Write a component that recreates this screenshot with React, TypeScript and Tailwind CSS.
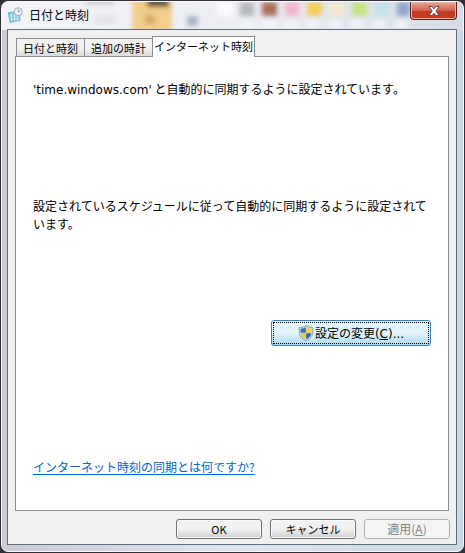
import { useState } from 'react';

const tabs = ['日付と時刻', '追加の時計', 'インターネット時刻'];

function ClockIcon() {
  return (
    <svg className="h-4 w-4 shrink-0" viewBox="0 0 16 16" aria-hidden="true">
      <path d="M1 5.5 12.5 4.5 13 13.5 3 15.5z" fill="#7cc5d8" stroke="#5ba8bf" strokeWidth="0.7" />
      <path d="M2 9h10.5M2.5 12h10M4.5 6v9M7.5 6v8.5M10.3 9v5.5" stroke="#e2f6fa" strokeWidth="0.7" />
      <circle cx="11.3" cy="4.7" r="4" fill="#eef2f3" stroke="#a2adb2" strokeWidth="1" />
      <path d="M11.3 2.4v2.5l2-.9" fill="none" stroke="#7c8c94" strokeWidth="0.9" />
    </svg>
  );
}

function ShieldIcon() {
  return (
    <svg className="h-4 w-4 shrink-0" viewBox="0 0 16 16" aria-hidden="true">
      <path
        d="M8 .5C6.3 1.9 4 2.6 1.2 2.6v4.2c0 3.9 2.7 6.8 6.8 8.7 4.1-1.9 6.8-4.8 6.8-8.7V2.6C12 2.6 9.7 1.9 8 .5z"
        fill="#d5dce0"
        stroke="#7b8c97"
        strokeWidth="0.8"
      />
      <path d="M7.8 2.1C6.4 3.1 4.7 3.7 2.6 3.8v4h5.2z" fill="#2b74c0" />
      <path d="M8.2 2.1c1.4 1 3.1 1.6 5.2 1.7v4H8.2z" fill="#f6d33c" />
      <path d="M2.7 8.2h5.1v6C5 12.7 3 10.7 2.7 8.2z" fill="#f2c92c" />
      <path d="M13.3 8.2H8.2v6c2.8-1.5 4.8-3.5 5.1-6z" fill="#2767b3" />
    </svg>
  );
}

// Whatever lies behind the translucent title bar
function GlassBackdrop() {
  return (
    <svg className="absolute left-0 top-0 h-7 w-[463px]" viewBox="0 0 463 28" aria-hidden="true">
      <defs>
        <filter id="glass" x="-20%" y="-50%" width="140%" height="200%">
          <feGaussianBlur stdDeviation="2.4" />
        </filter>
      </defs>
      <g filter="url(#glass)">
        <rect x="84" y="-3" width="28" height="5" fill="#c6c4d2" />
        <rect x="92" y="13" width="22" height="9" fill="#e3e4ea" />
        <rect x="130" y="-4" width="40" height="34" fill="#f3cf8b" />
        <rect x="145" y="-4" width="22" height="9" fill="#5d4c3c" />
        <rect x="143" y="13" width="10" height="9" fill="#d0a867" />
        <rect x="185" y="14" width="11" height="10" fill="#a9b4c9" />
        <rect x="215" y="0" width="16" height="14" fill="#fbfbfb" />
        <rect x="238" y="0" width="14" height="14" fill="#b6b8bb" />
        <rect x="260" y="0" width="15" height="14" fill="#a86f58" />
        <rect x="283" y="0" width="14" height="14" fill="#f2b5cb" />
        <rect x="305" y="0" width="15" height="14" fill="#f6cc5a" />
        <rect x="328" y="0" width="14" height="14" fill="#f1e9ca" />
        <rect x="350" y="0" width="15" height="14" fill="#c4e382" />
        <rect x="373" y="0" width="14" height="14" fill="#c2e2ea" />
        <rect x="395" y="0" width="13" height="14" fill="#94a7ca" />
        <path d="M238 22h176" stroke="#f1f4f8" strokeWidth="8" strokeDasharray="14 8" />
      </g>
    </svg>
  );
}

const buttonClass =
  'h-5 w-[86px] rounded-[3px] border border-[#707070] bg-linear-to-b from-[#f2f2f2] from-50% to-[#cfcfcf] to-100% text-center text-[11px] leading-4 text-black shadow-[inset_0_0_0_1px_#fbfbfb]';

export default function App() {
  const [active, setActive] = useState(2);

  return (
    <div className="flex min-h-screen flex-col bg-[#342f38] p-px font-['Noto_Sans_CJK_JP',sans-serif] text-xs text-black">
      <div className="relative flex flex-1 flex-col overflow-hidden rounded-[7px] border border-[#f7f9fb] bg-linear-to-r from-[#cbcbd7] via-[#dfe5ed] to-[#cbd8e5] pb-[6px] pl-[5px] pr-[6px]">
        <div className="absolute inset-x-0 top-0 h-7 bg-linear-to-r from-[#f3f4f7] via-[#eceef3] to-[#d5dce6]" />
        <GlassBackdrop />

        {/* Title bar */}
        <header className="relative flex h-[27px] shrink-0 items-center pb-[2px]">
          <ClockIcon />
          <h1 className="ml-[6px] flex-1 text-xs leading-4">日付と時刻</h1>
          <button
            type="button"
            aria-label="閉じる"
            className="flex h-[18px] w-[47px] items-center justify-center self-start rounded-b-[4px] border border-t-0 border-[#5a2023] bg-linear-to-b from-[#e6a69b] from-0% via-[#cf6352] via-50% to-[#c43b23] to-55% shadow-[inset_0_0_0_1px_#edb5a8]"
          >
            <svg className="h-3 w-3" viewBox="0 0 12 12" aria-hidden="true">
              <path
                d="M1 1.5h3l2 2.3 2-2.3h3L7.9 6l3.1 4.5H8L6 8.2l-2 2.3H1L4.1 6z"
                fill="#fff"
                stroke="#56484f"
                strokeWidth="0.9"
              />
            </svg>
          </button>
        </header>

        {/* Client area */}
        <main className="relative flex flex-1 flex-col border border-[#5f6e7b] bg-[#f0f0f0] px-[7px] pb-[5px] pt-[6px]">
          <div role="tablist" className="flex items-end px-px">
            {tabs.map((tab, i) => (
              <button
                key={tab}
                type="button"
                role="tab"
                aria-selected={active === i}
                onClick={() => setActive(i)}
                className={
                  active === i
                    ? 'relative -mb-px h-[21px] whitespace-nowrap border border-b-0 border-[#898c95] bg-white px-px pb-[2px] text-[11px] leading-4'
                    : 'h-[18px] w-[68px] whitespace-nowrap border border-r-0 border-b-0 border-[#898c95] bg-linear-to-b from-[#f3f3f3] from-50% to-[#dadada] text-[11px] leading-4'
                }
              >
                {tab}
              </button>
            ))}
          </div>

          <section
            role="tabpanel"
            className="flex flex-1 flex-col border border-[#898c95] bg-white px-[17px] pb-[34px] pt-[23px]"
          >
            <p className="leading-[18px]">
              <span className="font-['DejaVu_Sans',sans-serif]">'time.windows.com'</span>{' '}
              と自動的に同期するように設定されています。
            </p>
            <p className="mt-[98px] leading-[18px]">
              設定されているスケジュールに従って自動的に同期するように設定されています。
            </p>
            <button
              type="button"
              className="mt-[87px] h-[26px] w-40 self-end rounded-[3px] border border-[#3c7fb1] bg-linear-to-b from-[#e4f4fc] from-50% to-[#a9daf3] p-px"
            >
              <span className="flex h-full items-center justify-center border border-dotted border-black leading-4">
                <ShieldIcon />
                <span className="ml-px">
                  設定の変更
                  <span className="font-['DejaVu_Sans',sans-serif]">
                    (<u>C</u>)...
                  </span>
                </span>
              </span>
            </button>
            <a
              href="#internet-time"
              className="mt-auto self-start leading-[18px] text-[#0066cc] underline underline-offset-2"
            >
              インターネット時刻の同期とは何ですか?
            </a>
          </section>

          <footer className="-mr-px mt-2 flex justify-end gap-2">
            <button type="button" className={buttonClass}>
              OK
            </button>
            <button type="button" className={buttonClass}>
              キャンセル
            </button>
            <button
              type="button"
              disabled
              className="h-5 w-[86px] rounded-[3px] border border-[#adb2b5] bg-[#f4f4f4] text-center text-xs leading-4 text-[#838383]"
            >
              適用(<u>A</u>)
            </button>
          </footer>
        </main>
      </div>
    </div>
  );
}
